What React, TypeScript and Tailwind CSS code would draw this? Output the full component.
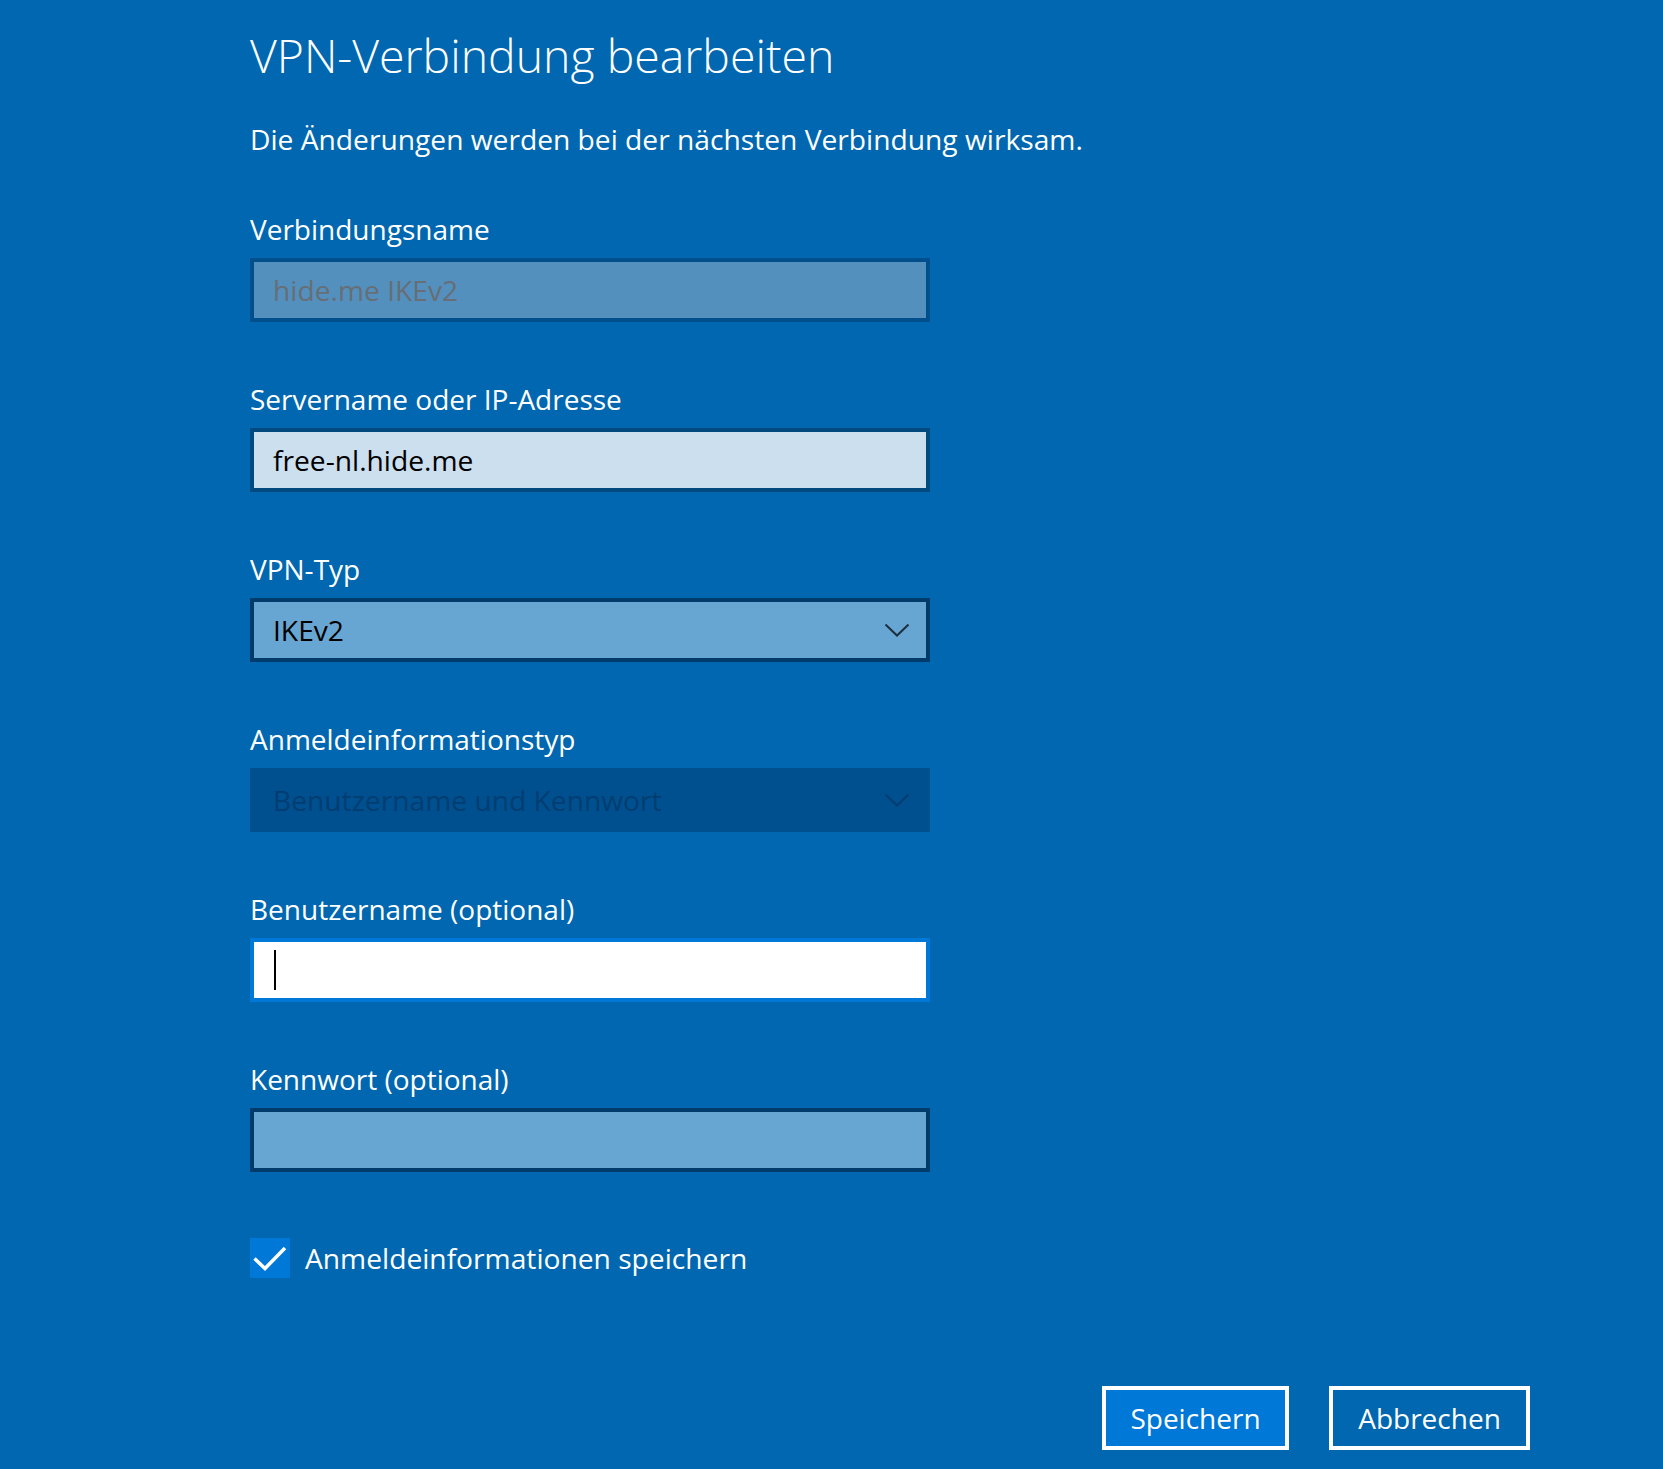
import React from 'react';

const Chevron: React.FC<{ color: string }> = ({ color }) => (
  <svg width="26" height="14" viewBox="0 0 26 14" fill="none" className="shrink-0">
    <path d="M1.5 1.5 L13 12.5 L24.5 1.5" stroke={color} strokeWidth="2" />
  </svg>
);

const Field: React.FC<{ label: string; children: React.ReactNode }> = ({ label, children }) => (
  <div className="flex flex-col">
    <div className="text-[28px] leading-[36px] text-white">{label}</div>
    <div className="mt-[11.5px]">{children}</div>
  </div>
);

const App: React.FC = () => {
  return (
    <div className="min-h-[1469px] w-full bg-[#0067b0] font-['Open_Sans','Noto_Sans',sans-serif] text-white">
      <div className="flex flex-col pl-[250px] pt-[25px]">
        <h1 className="text-[46.4px] leading-[60px] font-light">VPN-Verbindung bearbeiten</h1>
        <p className="mt-[36px] text-[28.2px] leading-[36px]">
          Die Änderungen werden bei der nächsten Verbindung wirksam.
        </p>

        <div className="mt-[53.5px] flex flex-col gap-[58.5px]">
          <Field label="Verbindungsname">
            <div className="flex h-[64px] w-[680px] items-center border-[4px] border-[#004f8d] bg-[#5390be] pl-[19px] text-[28.2px] text-[#676e75]">
              hide.me IKEv2
            </div>
          </Field>

          <Field label="Servername oder IP-Adresse">
            <div className="flex h-[64px] w-[680px] items-center border-[4px] border-[#004a80] bg-[#cbdfee] pl-[19px] text-[28.2px] text-black">
              free-nl.hide.me
            </div>
          </Field>

          <Field label="VPN-Typ">
            <div className="flex h-[64px] w-[680px] items-center justify-between border-[4px] border-[#003b6b] bg-[#67a6d2] pl-[19px] pr-[16px] text-[28.2px] text-black">
              <span>IKEv2</span>
              <Chevron color="#1c2f40" />
            </div>
          </Field>

          <Field label="Anmeldeinformationstyp">
            <div className="flex h-[64px] w-[680px] items-center justify-between bg-[#005090] pl-[23px] pr-[20px] text-[28.2px] text-[#003d70]">
              <span>Benutzername und Kennwort</span>
              <Chevron color="#003d70" />
            </div>
          </Field>

          <Field label="Benutzername (optional)">
            <div className="flex h-[64px] w-[680px] items-center border-[4px] border-[#0078d7] bg-white pl-[20px]">
              <div className="h-[40px] w-[2px] bg-black" />
            </div>
          </Field>

          <Field label="Kennwort (optional)">
            <div className="h-[64px] w-[680px] border-[4px] border-[#003b6b] bg-[#67a6d2]" />
          </Field>
        </div>

        <div className="mt-[66px] flex items-center">
          <div className="flex h-[40px] w-[40px] items-center justify-center bg-[#0078d7]">
            <svg width="40" height="40" viewBox="0 0 40 40" fill="none">
              <path d="M4.5 20.5 L15 30.5 L35 10" stroke="white" strokeWidth="3.5" />
            </svg>
          </div>
          <span className="ml-[15px] text-[28.2px] leading-[40px]">Anmeldeinformationen speichern</span>
        </div>

        <div className="mt-[108px] flex justify-end gap-[40px] pr-[133px]">
          <button className="flex h-[64px] w-[187px] items-center justify-center border-[4px] border-white bg-[#0078d7] text-[28px] text-white">
            Speichern
          </button>
          <button className="flex h-[64px] w-[201px] items-center justify-center border-[4px] border-white bg-[#0067b0] text-[28px] text-white">
            Abbrechen
          </button>
        </div>
      </div>
    </div>
  );
};

export default App;
